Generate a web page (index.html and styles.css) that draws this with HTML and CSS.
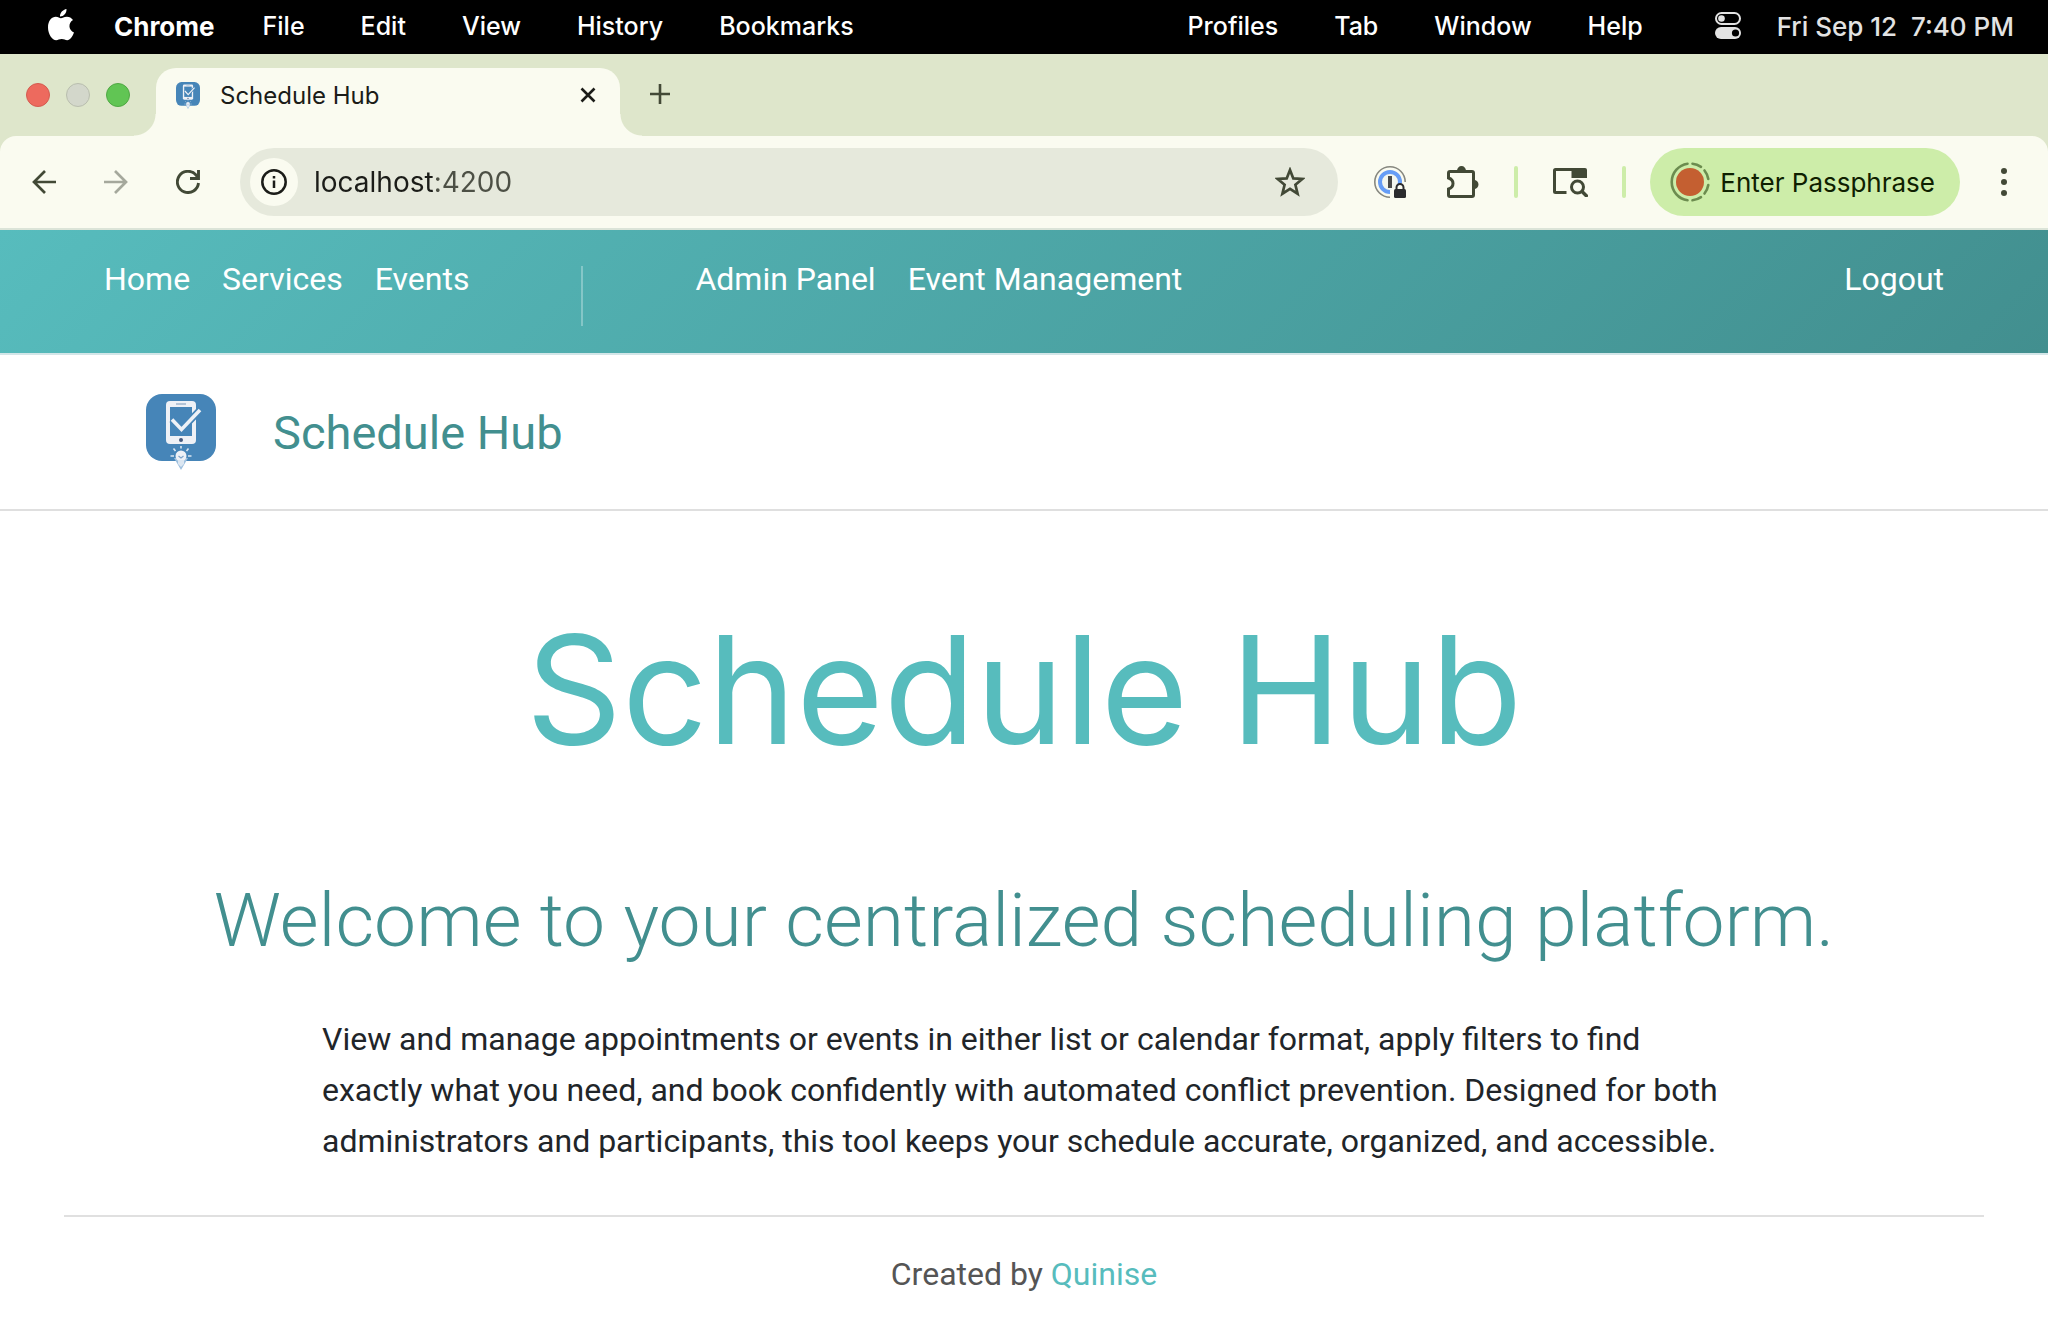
FILE: index.html
```html
<!DOCTYPE html>
<html lang="en">
<head>
<meta charset="utf-8">
<meta name="viewport" content="width=device-width, initial-scale=1">
<title>Schedule Hub</title>
<link rel="stylesheet" href="styles.css">
</head>
<body>
<svg class="sprite" aria-hidden="true">
  <symbol id="logo" viewBox="0 0 70 76">
    <rect width="70" height="67" rx="16" fill="#4685b8"/>
    <path d="M28 64h14l-7 12z" fill="#9dbfde"/>
    <rect x="20" y="7" width="30" height="43" rx="4" fill="#eef1f6"/>
    <rect x="24" y="13" width="22" height="29" fill="#4685b8"/>
    <path d="M30 10h10" stroke="#9fb4cc" stroke-width="1.5"/>
    <circle cx="35" cy="46" r="2" fill="#44597e"/>
    <path d="M26 25.500l9.500 10L54 16" fill="none" stroke="#4685b8" stroke-width="7"/>
    <path d="M26 25.500l9.500 10L54 16" fill="none" stroke="#eef1f6" stroke-width="3.600"/>
    <circle cx="35" cy="62" r="5.500" fill="#eef1f6"/>
    <path d="M32 66h6v4l-3 3-3-3z" fill="#dbe6f1"/>
    <path d="M32.500 62l2.500 2 2.500-2" fill="none" stroke="#7da3c8" stroke-width="1.200"/>
    <path d="M35 54.500V52M29.500 57l-2-2.500M40.500 57l2-2.500M28 62h-3.500M42 62h3.500" stroke="#dbe6f1" stroke-width="1.600"/>
  </symbol>
</svg>

<header class="menubar">
  <nav class="menus" aria-label="Application menu">
    <button class="menu-apple" aria-label="Apple">
      <svg width="26" height="32" viewBox="0 0 26 32" fill="#fff"><path d="M18.500 0c.3 4.200-3 7.600-6.500 7.500C11.700 3.900 15 .5 18.500 0zM12.900 9.300c1.400 0 3.200-1.600 6-1.600 2.400 0 4.700 1.200 6.100 3.300-5.300 3.200-4.400 10.400 1 12.400-1.200 3.400-3.900 7.800-6.800 7.800-2 0-3-1.200-5.500-1.200s-3.600 1.200-5.500 1.200C4.300 31.200 0 25 0 18.400 0 11.600 3.800 7.700 7.800 7.700c2.300 0 4 1.600 5.100 1.600z"/></svg>
    </button>
    <button class="menu menu-app">Chrome</button>
    <button class="menu">File</button>
    <button class="menu">Edit</button>
    <button class="menu">View</button>
    <button class="menu">History</button>
    <button class="menu">Bookmarks</button>
  </nav>
  <nav class="menus menus-right" aria-label="More menus">
    <button class="menu">Profiles</button>
    <button class="menu">Tab</button>
    <button class="menu">Window</button>
    <button class="menu">Help</button>
  </nav>
  <button class="control-center" aria-label="Control Center">
    <svg width="26" height="28" viewBox="0 0 26 28"><rect x="1" y="1" width="24" height="11" rx="5.500" fill="none" stroke="#e3e3e3" stroke-width="2"/><circle cx="6.500" cy="6.500" r="3.300" fill="#e3e3e3"/><rect y="15" width="26" height="12" rx="6" fill="#e3e3e3"/><circle cx="20.500" cy="21" r="3.600" fill="#000"/></svg>
  </button>
  <time class="clock">Fri Sep 12&nbsp; 7:40 PM</time>
</header>

<div class="tabstrip">
  <div class="lights">
    <button class="light light-close" aria-label="Close window"></button>
    <button class="light light-min" aria-label="Minimize window"></button>
    <button class="light light-max" aria-label="Zoom window"></button>
  </div>
  <div class="tab">
    <svg class="favicon" width="24" height="27" viewBox="0 0 70 76" preserveAspectRatio="none"><use href="#logo" width="70" height="76"/></svg>
    <span class="tab-title">Schedule Hub</span>
    <button class="icon-btn" aria-label="Close tab"><svg width="16" height="16" viewBox="0 0 16 16"><path d="M1.500 1.500l13 13M14.500 1.500l-13 13" stroke="#1b1c18" stroke-width="2.600"/></svg></button>
  </div>
  <button class="icon-btn new-tab" aria-label="New tab"><svg width="20" height="20" viewBox="0 0 20 20"><path d="M10 0v20M0 10h20" stroke="#424936" stroke-width="2.600"/></svg></button>
</div>

<div class="toolbar-back">
<div class="toolbar">
  <div class="history">
    <button class="icon-btn" aria-label="Back"><svg width="24" height="24" viewBox="0 0 24 24" fill="none" stroke="#424936" stroke-width="2.700"><path d="M24 12H2M13 1L2 12l11 11"/></svg></button>
    <button class="icon-btn" aria-label="Forward" disabled><svg width="24" height="24" viewBox="0 0 24 24" fill="none" stroke="#a5a89c" stroke-width="2.700"><path d="M0 12h22M11 1l11 11-11 11"/></svg></button>
    <button class="icon-btn" aria-label="Reload"><svg width="24" height="24" viewBox="0 0 24 24" fill="none" stroke="#424936" stroke-width="2.900"><path d="M22.500 13A10.600 10.600 0 1 1 20 5l2 3"/><path d="M22.500 0v8.500H14"/></svg></button>
  </div>
  <div class="omnibox">
    <button class="site-info" aria-label="View site information"><svg width="26" height="26" viewBox="0 0 26 26"><circle cx="13" cy="13" r="11.700" fill="none" stroke="#1b1c18" stroke-width="2.500"/><path d="M13 11.500V19M13 7v2.500" stroke="#1b1c18" stroke-width="2.500"/></svg></button>
    <input class="url" type="text" value="localhost:4200" aria-label="Address" spellcheck="false">
    <button class="icon-btn" aria-label="Bookmark this tab"><svg width="30" height="30" viewBox="0 0 30 30"><path d="M15 3l3.300 8.400 9 .6-6.900 5.800 2.200 8.900L15 21.900l-7.600 4.800 2.200-8.900L2.700 12l9-.6z" fill="none" stroke="#424936" stroke-width="2.700"/></svg></button>
  </div>
  <div class="extensions">
    <button class="icon-btn password" aria-label="Password manager, locked"><svg width="32" height="32" viewBox="0 0 32 32"><circle cx="16" cy="16" r="15.200" fill="none" stroke="#86877f" stroke-width="1.600"/><circle cx="16" cy="16" r="10" fill="#f3f6ee" stroke="#669df6" stroke-width="4"/><rect x="14" y="10" width="4" height="12" fill="#4a4b4a"/><path d="M16 24v8h16V16h-2l-10 6-4 2z" fill="#fafbf0"/><rect x="20" y="23" width="12" height="9" rx="1.500" fill="#2b2c2e"/><path d="M22.500 24v-2.500a3.500 3.500 0 0 1 7 0V24" fill="none" stroke="#2b2c2e" stroke-width="2"/></svg></button>
    <button class="icon-btn" aria-label="Extensions"><svg width="34" height="32" viewBox="0 0 34 32"><path d="M4 5.500h22a1.500 1.500 0 0 1 1.500 1.500v22a1.500 1.500 0 0 1-1.500 1.500H4A1.500 1.500 0 0 1 2.500 29v-6c6-2 6-9 0-11V7A1.500 1.500 0 0 1 4 5.500z" fill="none" stroke="#424936" stroke-width="3"/><path d="M11 5a4.500 5 0 0 1 9 0zM28 14a4.500 4.500 0 0 1 0 9z" fill="#424936"/></svg></button>
    <span class="divider"></span>
    <button class="icon-btn" aria-label="Search tabs"><svg width="36" height="30" viewBox="0 0 36 30" fill="none" stroke="#424936"><path d="M14.500 25.500H3.500a1 1 0 0 1-1-1v-21a1 1 0 0 1 1-1H33" stroke-width="3"/><path d="M19.500 1H33a2 2 0 0 1 2 2v8H19.500z" fill="#424936" stroke="none"/><circle cx="25.500" cy="20" r="6" stroke-width="3"/><path d="M29.500 24l6 6" stroke-width="3.400"/></svg></button>
    <span class="divider"></span>
  </div>
  <button class="profile">
    <svg width="40" height="40" viewBox="0 0 40 40"><circle cx="20" cy="20" r="14" fill="#c45f31"/><g fill="none" stroke="#6c8c4f" stroke-width="2.600" stroke-linecap="round"><path d="M17.500 1.700a18.500 18.500 0 0 0 0 36.600"/><path d="M22.500 1.700A18.500 18.500 0 0 1 31 4.800M34.500 8.500a18.500 18.500 0 0 1 3.800 8.500M38.300 23a18.500 18.500 0 0 1-3.800 8.500M31 35.200a18.500 18.500 0 0 1-8.500 3.100"/></g></svg>
    Enter Passphrase
  </button>
  <button class="icon-btn more" aria-label="More options"><svg width="6" height="28" viewBox="0 0 6 28" fill="#424936"><circle cx="3" cy="3" r="3"/><circle cx="3" cy="14" r="3"/><circle cx="3" cy="25" r="3"/></svg></button>
</div>
</div>

<nav class="site-nav" aria-label="Site">
  <div class="nav-group">
    <a href="#">Home</a>
    <a href="#">Services</a>
    <a href="#">Events</a>
  </div>
  <div class="nav-group nav-admin">
    <a href="#">Admin Panel</a>
    <a href="#">Event Management</a>
  </div>
  <a class="logout" href="#">Logout</a>
</nav>

<div class="brand">
  <svg class="brand-logo" width="70" height="76" role="img" aria-label="Schedule Hub logo"><use href="#logo"/></svg>
  <span class="brand-name">Schedule Hub</span>
</div>

<main class="hero">
  <h1>Schedule Hub</h1>
  <h2>Welcome to your centralized scheduling platform.</h2>
  <p>View and manage appointments or events in either list or calendar format, apply filters to find exactly what you need, and book confidently with automated conflict prevention. Designed for both administrators and participants, this tool keeps your schedule accurate, organized, and accessible.</p>
</main>

<footer class="footer">Created by <a href="#">Quinise</a></footer>
</body>
</html>
```
FILE: styles.css
```css
* {
  box-sizing: border-box;
}

body {
  margin: 0;
  background: #fff;
  color: #212529;
  font-family: Roboto, "Noto Sans", sans-serif;
  font-size: 32px;
}

button {
  border: 0;
  padding: 0;
  background: none;
  color: inherit;
  font: inherit;
  white-space: nowrap;
}

a {
  color: inherit;
  text-decoration: none;
}

svg {
  display: block;
  flex: none;
}

.sprite {
  position: absolute;
  width: 0;
  height: 0;
}

/* System menu bar */
.menubar,
.tabstrip,
.toolbar {
  font-family: Inter, "Liberation Sans", sans-serif;
}

.menubar {
  display: flex;
  align-items: center;
  height: 54px;
  padding: 0 34px 2px 48px;
  background: #000;
  color: #fff;
  font-size: 26px;
  font-weight: 500;
}

.menus {
  display: flex;
  align-items: center;
  gap: 56px;
}

.menus-right {
  margin-left: auto;
}

.menu {
  font-size: 25px;
}

.menu-apple {
  margin-right: -16px;
  padding-bottom: 2px;
}

.menu-app {
  margin-right: -8px;
  font-size: 26px;
  font-weight: 700;
}

.control-center {
  margin-left: 72px;
}

.clock {
  margin-left: 36px;
  color: #e3e3e3;
}

/* Tab strip */
.tabstrip {
  display: flex;
  align-items: flex-end;
  height: 82px;
  padding-left: 26px;
  background: #dee6cb;
}

.lights {
  display: flex;
  gap: 16px;
  margin-right: 26px;
  padding-bottom: 29px;
}

.light {
  width: 24px;
  height: 24px;
  border: 1px solid;
  border-radius: 50%;
}

.light-close {
  background: #ed6a5e;
  border-color: #d45b50;
}

.light-min {
  background: #d3d7cb;
  border-color: #b9beae;
}

.light-max {
  background: #61c554;
  border-color: #50a844;
}

.tab {
  position: relative;
  display: flex;
  align-items: center;
  width: 464px;
  height: 68px;
  padding: 0 24px 14px 20px;
  border-radius: 20px 20px 0 0;
  background: #fafbf0;
  color: #1b1c18;
  font-size: 24px;
}

.tab::before,
.tab::after {
  content: "";
  position: absolute;
  bottom: 0;
  width: 22px;
  height: 22px;
}

.tab::before {
  right: 100%;
  background: radial-gradient(circle at 0 0, transparent 21px, #fafbf0 22px);
}

.tab::after {
  left: 100%;
  background: radial-gradient(circle at 100% 0, transparent 21px, #fafbf0 22px);
}

.tab-title {
  flex: 1;
  margin-left: 20px;
}

.icon-btn {
  display: flex;
  align-items: center;
  justify-content: center;
}

.new-tab {
  margin: 0 0 32px 30px;
}

/* Toolbar */
.toolbar-back {
  background: #dee6cb;
}

.toolbar {
  display: flex;
  align-items: center;
  height: 94px;
  padding: 0 41px 0 32px;
  border-bottom: 2px solid #dbe4d8;
  border-radius: 16px 16px 0 0;
  background: #fafbf0;
}

.history {
  display: flex;
  gap: 48px;
  margin-right: 40px;
}

.omnibox {
  display: flex;
  flex: 1;
  align-items: center;
  height: 68px;
  padding: 0 33px 0 10px;
  border-radius: 34px;
  background: #e6e9dc;
}

.site-info {
  display: flex;
  flex: none;
  align-items: center;
  justify-content: center;
  width: 48px;
  height: 48px;
  border-radius: 50%;
  background: #fafbf0;
}

.url {
  flex: 1;
  min-width: 0;
  margin-left: 16px;
  padding: 0;
  border: 0;
  outline: 0;
  background: linear-gradient(90deg, #1b1c18 121px, #4d5045 121px);
  background-clip: text;
  color: transparent;
  font: inherit;
  font-size: 28px;
}

.extensions {
  display: flex;
  align-items: center;
  gap: 34px;
  margin: 0 24px 0 36px;
}

.password {
  margin-right: 6px;
}

.divider {
  width: 4px;
  height: 32px;
  border-radius: 2px;
  background: #cdeda9;
}

.profile {
  display: flex;
  align-items: center;
  gap: 10px;
  height: 68px;
  padding: 0 25px 0 20px;
  border-radius: 34px;
  background: #cdeda9;
  color: #0f2000;
  font-size: 26px;
}

.more {
  margin-left: 41px;
}

/* Site navigation */
.site-nav {
  display: flex;
  align-items: flex-start;
  height: 125px;
  padding: 30px 104px 0;
  border-bottom: 2px solid #d3e6e8;
  background: linear-gradient(135deg, #57bcbd, #428f8f);
  color: #fff;
  line-height: 38px;
}

.nav-group {
  display: flex;
  gap: 32px;
}

.nav-admin {
  position: relative;
  margin-left: 226px;
}

.nav-admin::before {
  content: "";
  position: absolute;
  top: 6px;
  left: -114px;
  width: 2px;
  height: 60px;
  background: rgba(255, 255, 255, 0.3);
}

.logout {
  margin-left: auto;
}

.brand {
  display: flex;
  align-items: center;
  gap: 57px;
  height: 156px;
  padding: 0 146px;
  border-bottom: 2px solid #dfdfdf;
  color: #428f8f;
  font-size: 47px;
}

/* Landing copy */
.hero {
  padding: 0 64px;
  text-align: center;
}

.hero h1 {
  margin: 93px 0 0;
  color: #57bcbd;
  font-family: Inter, "Liberation Sans", sans-serif;
  font-size: 150px;
  font-weight: 400;
  line-height: 172px;
}

.hero h2 {
  margin: 98px 0 0;
  color: #428f8f;
  font-size: 75px;
  font-weight: 300;
  line-height: 92px;
}

.hero p {
  max-width: 1404px;
  margin: 48px auto 0;
  line-height: 51px;
  text-align: left;
}

.footer {
  margin: 48px 64px 0;
  padding: 35px 0;
  border-top: 2px solid #e0e0e0;
  color: #555;
  line-height: 44px;
  text-align: center;
}

.footer a {
  color: #57bcbd;
}
```
